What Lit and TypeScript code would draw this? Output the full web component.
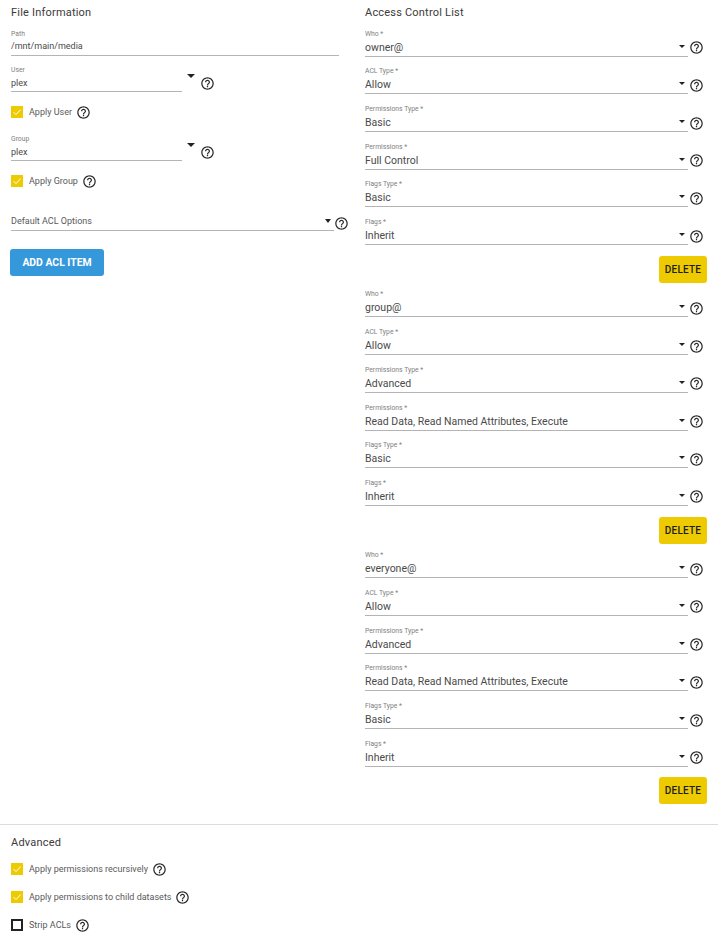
import { LitElement, html, css, svg } from "lit";
import { customElement } from "lit/decorators.js";

const help = html`<svg class="help" viewBox="0 0 24 24" width="15" height="15"><path fill="#2a2a2a" d="M11 18h2v-2h-2v2zm1-16C6.48 2 2 6.48 2 12s4.48 10 10 10 10-4.48 10-10S17.52 2 12 2zm0 18c-4.41 0-8-3.59-8-8s3.59-8 8-8 8 3.59 8 8-3.59 8-8 8zm0-14c-2.21 0-4 1.79-4 4h2c0-1.1.9-2 2-2s2 .9 2 2c0 2-3 1.75-3 5h2c0-2.25 3-2.5 3-5 0-2.21-1.79-4-4-4z"/></svg>`;

const check = svg`<path d="M2.6 6.2 5 8.6 9.6 3.6" fill="none" stroke="#fff" stroke-width="1"/>`;

interface Acl { who: string; ptype: string; perms: string; }
const acls: Acl[] = [
  { who: "owner@", ptype: "Basic", perms: "Full Control" },
  { who: "group@", ptype: "Advanced", perms: "Read Data, Read Named Attributes, Execute" },
  { who: "everyone@", ptype: "Advanced", perms: "Read Data, Read Named Attributes, Execute" },
];

@customElement("app-root")
export class AppRoot extends LitElement {
  static styles = css`
    :host { display: block; height: 935px; overflow: hidden; background: #fff; font-family: Roboto, sans-serif; color: #333; }
    * { box-sizing: border-box; }
    .top { display: flex; height: 825px; border-bottom: 1px solid #dcdcdc; }
    .left { width: 365px; padding: 6px 0 0 11px; flex: none; }
    .right { width: 342px; padding-top: 6px; flex: none; }
    h3 { margin: 0; font-size: 11px; font-weight: 400; line-height: 14px; letter-spacing: .2px; color: #3a3a3a; white-space: nowrap; }

    .row { display: flex; align-items: flex-start; }
    .field { flex: 1; min-width: 0; position: relative; border-bottom: 1px solid #b4b4b4; }
    .lab { font-size: 6.8px; line-height: 9px; color: #808080; height: 9px; white-space: nowrap; }
    .val { font-size: 9px; line-height: 15px; height: 16px; color: #4a4a4a; white-space: nowrap; }
    .arrow { width: 0; height: 0; border-left: 4px solid transparent; border-right: 4px solid transparent; border-top: 4px solid #222; }
    .help { display: block; flex: none; }

    /* left column */
    .path { margin-top: 10px; width: 328px; }
    .user { margin-top: 10px; }
    .user .field { flex: none; width: 171px; }
    .user .val { line-height: 17px; }
    .user .arrow { margin: 8px 0 0 5px; }
    .user .help { margin: 10px 0 0 5px; }
    .chk { display: flex; align-items: center; height: 16px; font-size: 9px; color: #5a5a5a; }
    .box { width: 12px; height: 12px; background: #edcb00; margin-right: 6px; flex: none; display: block; }
    .box.off { background: #fff; border: 2px solid #222; }
    .chk .help { margin-left: 4px; }
    .left .chk { margin-top: 12px; }
    .left .user.g { margin-top: 15px; }
    .dflt { margin-top: 26px; width: 338px; display: flex; align-items: flex-end; }
    .dflt .field { height: 16px; font-size: 9px; line-height: 12px; color: #5a5a5a; }
    .dflt .arrow { position: absolute; right: 3px; top: 4px; border-left-width: 3.75px; border-right-width: 3.75px; }
    .dflt .help { margin: 0 0 .5px 0; }
    .add { display: block; margin: 18px 0 0 -1px; width: 94px; height: 27px; background: #3498db; color: #fff; border: 0; border-radius: 3px; font: 700 10.4px Roboto, sans-serif; padding: 0; }

    /* right column */
    .right h3 { margin-bottom: 10px; }
    .stack { margin-top: -11px; }
    .acl .row { height: 37.7px; align-items: flex-end; }
    .acl .row .field { width: 323px; flex: none; height: 27px; }
    .acl .val { font-size: 10.5px; line-height: 17px; height: 14px; }
    .acl .arrow { position: absolute; right: 3px; top: 15px; border-left-width: 3.75px; border-right-width: 3.75px; border-top-width: 3.5px; }
    .acl .help { margin: 0 0 1.5px 1px; }
    .del-row { display: flex; justify-content: flex-end; height: 34.67px; padding: 10.8px 0 0; }
    .del { width: 48px; height: 27px; flex: none; background: #edcb00; color: #1d1d1d; border: 0; border-radius: 3px; font: 500 10px Roboto, sans-serif; letter-spacing: .2px; padding: 0; }

    /* advanced */
    .adv { padding: 11px 0 0 11px; }
    .adv h3 { margin-bottom: 11px; }
    .adv .chk + .chk { margin-top: 12px; }
  `;

  private sel(label: string, value: string) {
    return html`<div class="row">
      <div class="field"><div class="lab">${label}</div><div class="val">${value}</div><div class="arrow"></div></div>
      ${help}
    </div>`;
  }

  private box(on = true) {
    return on
      ? html`<svg class="box" viewBox="0 0 12 12">${check}</svg>`
      : html`<span class="box off"></span>`;
  }

  private chk(label: string, on = true) {
    return html`<div class="chk">${this.box(on)}<span>${label}</span>${help}</div>`;
  }

  private user(label: string, value: string, extra = "") {
    return html`<div class="row user ${extra}">
      <div class="field"><div class="lab">${label}</div><div class="val">${value}</div></div>
      <div class="arrow"></div>${help}
    </div>`;
  }

  render() {
    return html`
      <div class="top">
        <div class="left">
          <h3>File Information</h3>
          <div class="field path"><div class="lab">Path</div><div class="val">/mnt/main/media</div></div>
          ${this.user("User", "plex")}
          ${this.chk("Apply User")}
          ${this.user("Group", "plex", "g")}
          ${this.chk("Apply Group")}
          <div class="dflt"><div class="field">Default ACL Options<div class="arrow"></div></div>${help}</div>
          <button class="add">ADD ACL ITEM</button>
        </div>
        <div class="right">
          <h3>Access Control List</h3>
          <div class="stack">
            ${acls.map(a => html`<div class="acl">
              ${this.sel("Who *", a.who)}
              ${this.sel("ACL Type *", "Allow")}
              ${this.sel("Permissions Type *", a.ptype)}
              ${this.sel("Permissions *", a.perms)}
              ${this.sel("Flags Type *", "Basic")}
              ${this.sel("Flags *", "Inherit")}
              <div class="del-row"><button class="del">DELETE</button></div>
            </div>`)}
          </div>
        </div>
      </div>
      <div class="adv">
        <h3>Advanced</h3>
        ${this.chk("Apply permissions recursively")}
        ${this.chk("Apply permissions to child datasets")}
        ${this.chk("Strip ACLs", false)}
      </div>
    `;
  }
}
